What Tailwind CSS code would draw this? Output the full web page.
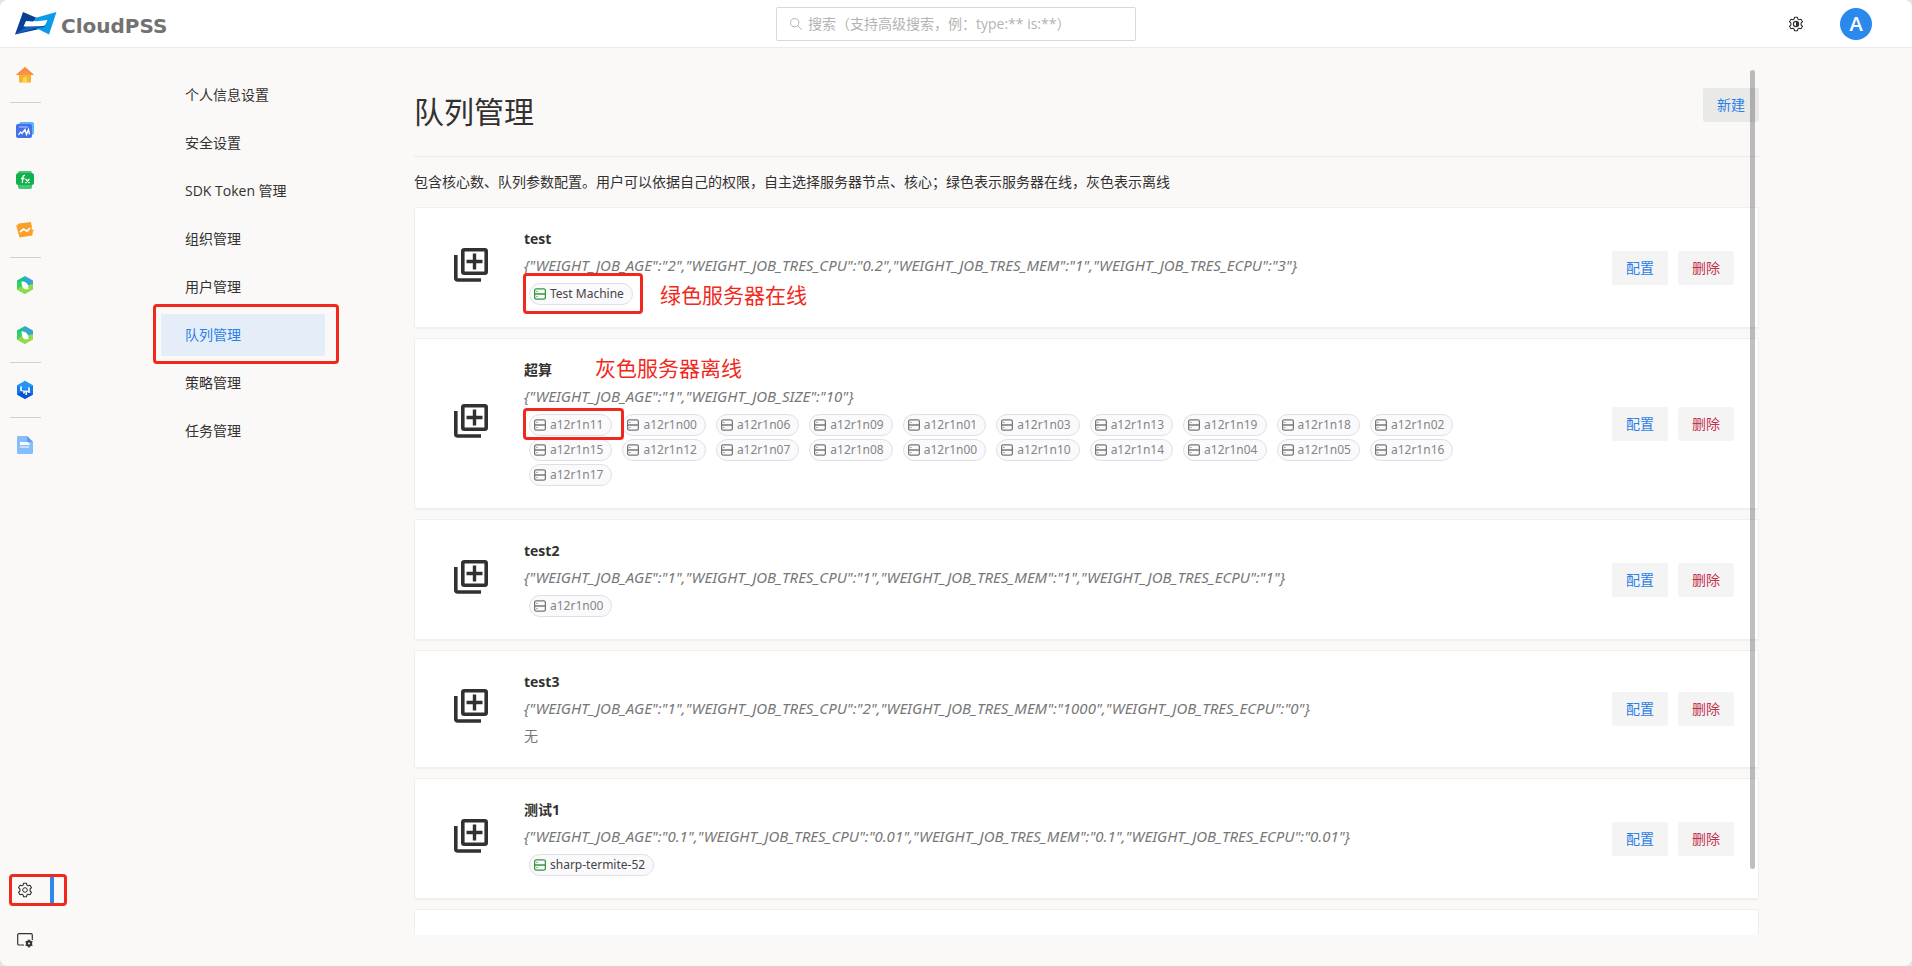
<!DOCTYPE html>
<html lang="zh-CN">
<head>
<meta charset="utf-8">
<title>CloudPSS - 队列管理</title>
<script src="https://cdn.jsdelivr.net/npm/@tailwindcss/browser@4"></script>
</head>
<body class="bg-[#e4e4e4] font-['Open_Sans','Noto_Sans_CJK_SC',sans-serif] text-sm text-[#323130]">
<svg class="hidden">
  <symbol id="gear" viewBox="0 0 16 16"><path d="M6.600 1.200h2.800l.5 1.900 1.200.7 1.900-.6 1.500 2.500-1.400 1.300v2l1.400 1.300-1.500 2.500-1.900-.6-1.200.7-.5 1.900H6.600l-.5-1.900-1.200-.7-1.900.6-1.500-2.500L2.900 9V7L1.500 5.700 3 3.200l1.900.6 1.200-.7z" fill="none" stroke="currentColor" stroke-width="1.1" stroke-linejoin="round"/></symbol>
  <symbol id="queue" viewBox="0 0 34 34"><path d="M1.800 7v23a2 2 0 0 0 2 2H27" fill="none" stroke="currentColor" stroke-width="3.6"/><rect x="8.800" y="1.800" width="23.400" height="23.400" rx="1.500" fill="none" stroke="currentColor" stroke-width="3.6"/><path d="M20.500 5.500v16M12.500 13.500h16" stroke="currentColor" stroke-width="3.4"/></symbol>
  <symbol id="server" viewBox="0 0 12 12"><rect x=".6" y=".9" width="10.800" height="10.200" rx="1.600" fill="none" stroke="currentColor" stroke-width="1.3"/><path d="M.6 6h10.800" stroke="currentColor" stroke-width="1.500"/><path d="M2.300 3.400h1.200M2.300 8.600h1.200" stroke="currentColor" stroke-width="1"/></symbol>
  <symbol id="hexleaf" viewBox="0 0 18 18"><path d="M9 0L1 4.500V9l8 0z" fill="#18c48e"/><path d="M9 0l8 4.500V13L9 9z" fill="#3aa3dc"/><path d="M1 4.500L9 9v9L1 13.500z" fill="#35cf62"/><path d="M1 13.500L4 11l9-2 4-1v5.500L9 18z" fill="#8fdc48"/><path d="M5.200 5.500c3-.6 6.600 1.500 7 4.200.3 1.600-.2 2.300.6 3.300-2.600.5-4.600.4-5.900-1.200C5.500 10 6.100 7.600 5.200 5.500z" fill="#fff"/></symbol>
</svg>
<div class="relative flex h-screen flex-col overflow-hidden rounded-lg bg-[#faf9f8]">
  <header class="grid h-12 shrink-0 grid-cols-[1fr_360px_1fr] items-center border-b border-[#edebe9] bg-white">
    <a href="#" class="flex items-center gap-1 pl-[15px]" aria-label="CloudPSS">
      <svg class="h-[23px] w-[42px]" viewBox="0 0 42 23"><path d="M8 0l14 6-4 4-7-1-2.500 5.500L31 13l-2 3L0 22.500z" fill="#0a3f97"/><path d="M41.500 0L34 22.500 21 16l8-1 3.500-7L20 9.500V6z" fill="#0c9be6"/><path d="M0 22.500L21 16l10-3-17 .6-4.500 2.400z" fill="#1560b8"/><path d="M12.500 9.500h19l-2.500 4.500-18.500.5z" fill="#fff"/></svg>
      <span class="pt-1 font-['DejaVu_Sans'] text-[20px] leading-6 font-bold text-[#727272]">CloudPSS</span>
    </a>
    <label class="flex h-[34px] items-center gap-1.5 rounded-xs border border-[#d9d9d9] pl-[13px] text-[#b3b3b3]">
      <svg class="size-3 shrink-0" viewBox="0 0 12 12" fill="none" stroke="currentColor"><circle cx="4.700" cy="4.700" r="4.100"/><path d="M7.700 7.700l4 4"/></svg>
      <input type="search" aria-label="搜索" placeholder="搜索（支持高级搜索，例：type:** is:**）" class="w-full bg-transparent text-sm outline-none placeholder:text-[#b3b3b3]">
    </label>
    <div class="flex items-center justify-end gap-9 pr-10">
      <button type="button" aria-label="主题设置" class="text-[#323130]"><svg class="size-4" viewBox="0 0 16 16"><use href="#gear"/><circle cx="8" cy="8" r="2.600" fill="none" stroke="currentColor" stroke-width="1.200"/><path d="M8 5.400a2.600 2.600 0 0 1 0 5.200z" fill="currentColor"/></svg></button>
      <button type="button" class="size-8 rounded-full bg-[#2b88ed] text-xl leading-8 font-semibold text-white">A</button>
    </div>
  </header>
  <div class="flex min-h-0 flex-1">
    <aside class="flex w-[50px] shrink-0 flex-col pt-0.5">
      <a href="#" aria-label="首页" class="flex h-[50px] items-center justify-center"><svg class="size-[18px]" viewBox="0 0 18 18"><path d="M9 1L0 9h3v7.500h12V9h3z" fill="#f9b42d"/><path d="M9 1L0 8.800h18z" fill="#f68b4c"/><path d="M9 4.500L3 9h12z" fill="#f5964a"/><path d="M7 16.500v-3.500a2 2 0 0 1 4 0v3.500z" fill="#fdd65c"/></svg></a>
      <div class="px-2.5 py-0.5"><hr class="w-[31px] border-[#d2d0ce]"></div>
      <a href="#" aria-label="仿真" class="flex h-[50px] items-center justify-center"><svg class="size-[18px]" viewBox="0 0 18 18"><rect x="3" y="1" width="15" height="13" rx="2" fill="#5db4f8"/><rect y="3" width="16" height="14" rx="2" fill="#4470e8"/><path d="M3 6h9" stroke="#b9cdfb" stroke-width="1.200"/><path d="M2.500 14l2-3 1.500 1.500 3-4 1.500 5 2-5 1 5" fill="none" stroke="#fff" stroke-width="1.300"/></svg></a>
      <a href="#" aria-label="函数" class="flex h-[50px] items-center justify-center"><svg class="size-[18px]" viewBox="0 0 18 18"><rect x="2" y="0" width="14" height="18" rx="2" fill="#43c777"/><rect y="2" width="18" height="12" rx="2.500" fill="#12b04c"/><path d="M9 4.500c-1.800-.5-2 .6-2.200 2.500L6.300 12M5 7.500h3.500M9.500 8l4 4M13.500 8l-4 4" fill="none" stroke="#fff" stroke-width="1.300"/></svg></a>
      <a href="#" aria-label="应用" class="flex h-[50px] items-center justify-center"><svg class="size-[18px]" viewBox="0 0 18 18"><path d="M0 4l5-1.500L16 4l-1 4 3 1-2 5H3z" fill="#fbb73a"/><path d="M3 2.500L15 1l1.500 13.500L3.500 16.500 1 6z" fill="#f9a02c"/><path d="M4 11l3.500-3 3.500 2.200 3-3" fill="none" stroke="#fff" stroke-width="1.700"/></svg></a>
      <div class="px-2.5 py-0.5"><hr class="w-[31px] border-[#d2d0ce]"></div>
      <a href="#" aria-label="模型" class="flex h-[50px] items-center justify-center"><svg class="size-[18px]"><use href="#hexleaf"/></svg></a>
      <a href="#" aria-label="数据" class="flex h-[50px] items-center justify-center"><svg class="size-[18px]"><use href="#hexleaf"/></svg></a>
      <div class="px-2.5 py-0.5"><hr class="w-[31px] border-[#d2d0ce]"></div>
      <a href="#" aria-label="分析" class="flex h-[50px] items-center justify-center"><svg class="size-[18px]" viewBox="0 0 18 18"><path d="M9 0l8 4.500v9L9 18l-8-4.500v-9z" fill="#1379ee"/><path d="M1 13.500L9 9l8 4.500L9 18z" fill="#0b50cf"/><path d="M9 0l8 4.500L9 9 1 4.500z" fill="#2596f6"/><path d="M5 5.500v4M8 10v2.500M10.300 9.500V14M13 6.500V12" stroke="#fff" stroke-width="1.700"/><path d="M4.500 9.500l8 1" stroke="#fff"/></svg></a>
      <div class="px-2.5 py-0.5"><hr class="w-[31px] border-[#d2d0ce]"></div>
      <a href="#" aria-label="文档" class="flex h-[50px] items-center justify-center"><svg class="size-[18px]" viewBox="0 0 18 18"><path d="M2 0h9l6 6v10.500a1.500 1.500 0 0 1-1.500 1.500h-13A1.500 1.500 0 0 1 1 16.500V1a1 1 0 0 1 1-1z" fill="#86bdfb"/><path d="M11 0l6 6h-4.500A1.500 1.500 0 0 1 11 4.500z" fill="#5d9cf0"/><path d="M4 6h7.500l2 1.500V9H4zM4 10.500h9v1H4z" fill="#fff"/></svg></a>
      <div class="mt-auto pb-px">
        <div class="relative">
          <a href="#" aria-label="设置" class="flex h-[50px] items-center justify-center"><svg class="size-4" viewBox="0 0 16 16"><use href="#gear"/><circle cx="8" cy="8" r="2.300" fill="none" stroke="currentColor"/></svg></a>
          <span class="absolute top-3 left-[50px] h-[26px] w-1 bg-[#2b88ed]"></span>
          <span class="absolute top-[9px] left-[9px] h-8 w-[58px] rounded-sm border-3 border-[#f1291c]"></span>
        </div>
        <a href="#" aria-label="系统管理" class="flex h-[50px] items-center justify-center"><svg class="size-4" viewBox="0 0 16 16"><path d="M7 13H2A1.300 1.300 0 0 1 .7 11.700V3A1.300 1.300 0 0 1 2 1.700h12A1.300 1.300 0 0 1 15.300 3v5" fill="none" stroke="currentColor" stroke-width="1.200"/><circle cx="12" cy="11.500" r="2.200" fill="none" stroke="currentColor" stroke-width="1.900"/><path d="M12 7.500v8M8.500 9.500l7 4M15.500 9.500l-7 4" stroke="currentColor" stroke-width="1.400"/><circle cx="12" cy="11.500" r="1" fill="#faf9f8"/></svg></a>
      </div>
    </aside>
    <nav class="ml-[111px] flex w-[164px] shrink-0 flex-col gap-1.5 pt-[26px]">
      <a href="#" class="h-[42px] pl-6 leading-[42px]">个人信息设置</a>
      <a href="#" class="h-[42px] pl-6 leading-[42px]">安全设置</a>
      <a href="#" class="h-[42px] pl-6 leading-[42px]">SDK Token 管理</a>
      <a href="#" class="h-[42px] pl-6 leading-[42px]">组织管理</a>
      <a href="#" class="h-[42px] pl-6 leading-[42px]">用户管理</a>
      <a href="#" aria-current="page" class="relative h-[42px] rounded-xs bg-[#e5eef8] pl-6 leading-[42px] text-[#2b7fe8]">队列管理<span class="absolute -top-2.5 -left-2 h-[60px] w-[186px] rounded-sm border-3 border-[#f1291c]"></span></a>
      <a href="#" class="h-[42px] pl-6 leading-[42px]">策略管理</a>
      <a href="#" class="h-[42px] pl-6 leading-[42px]">任务管理</a>
    </nav>
    <main class="relative mt-[22px] mr-[153px] mb-[31px] ml-[89px] min-w-0 flex-1 overflow-hidden">
      <div class="flex h-[87px] items-start justify-between border-b border-[#edebe9] pt-[18px]">
        <h1 class="text-[30px] leading-[48px]">队列管理</h1>
        <button type="button" class="h-[34px] w-14 rounded-xs bg-[#e9e9e8] text-[#2b7fe8]">新建</button>
      </div>
      <p class="py-3.5 leading-[22px]">包含核心数、队列参数配置。用户可以依据自己的权限，自主选择服务器节点、核心；绿色表示服务器在线，灰色表示离线</p>
      <div id="queues" class="flex flex-col gap-2.5"></div>
      <div class="absolute top-0 right-1 h-[799px] w-[5px] rounded-full bg-black/25"></div>
    </main>
  </div>
</div>
<script>
const queues = [
  {name: 'test', weights: '{"WEIGHT_JOB_AGE":"2","WEIGHT_JOB_TRES_CPU":"0.2","WEIGHT_JOB_TRES_MEM":"1","WEIGHT_JOB_TRES_ECPU":"3"}', nodes: ['Test Machine'], online: true,
   notes: '<span class="absolute top-[65px] left-[108px] h-[41px] w-[120px] rounded-sm border-3 border-[#f1291c]"></span><span class="absolute top-[71px] left-[245px] text-[21px] leading-8 text-[#f1291c]">绿色服务器在线</span>'},
  {name: '超算', weights: '{"WEIGHT_JOB_AGE":"1","WEIGHT_JOB_SIZE":"10"}',
   nodes: ['11','00','06','09','01','03','13','19','18','02','15','12','07','08','00','10','14','04','05','16','17'].map(n => 'a12r1n' + n),
   notes: '<span class="absolute top-[69px] left-[108px] h-8 w-[101px] rounded-sm border-3 border-[#f1291c]"></span><span class="absolute top-[13px] left-[180px] text-[21px] leading-8 text-[#f1291c]">灰色服务器离线</span>'},
  {name: 'test2', weights: '{"WEIGHT_JOB_AGE":"1","WEIGHT_JOB_TRES_CPU":"1","WEIGHT_JOB_TRES_MEM":"1","WEIGHT_JOB_TRES_ECPU":"1"}', nodes: ['a12r1n00']},
  {name: 'test3', weights: '{"WEIGHT_JOB_AGE":"1","WEIGHT_JOB_TRES_CPU":"2","WEIGHT_JOB_TRES_MEM":"1000","WEIGHT_JOB_TRES_ECPU":"0"}', nodes: []},
  {name: '测试1', weights: '{"WEIGHT_JOB_AGE":"0.1","WEIGHT_JOB_TRES_CPU":"0.01","WEIGHT_JOB_TRES_MEM":"0.1","WEIGHT_JOB_TRES_ECPU":"0.01"}', nodes: ['sharp-termite-52'], online: true},
];
const tag = (n, on) => `<li class="flex h-[22px] min-w-[83px] items-center gap-1 rounded-full border border-[#e1dfe3] bg-[#fafafc] pr-2 pl-1 font-['Noto_Sans'] text-xs ${on ? 'text-[#444444]' : 'text-[#858585]'}"><svg class="size-3 shrink-0 ${on ? 'text-[#2f9a3a]' : 'text-[#777777]'}"><use href="#server"/></svg>${n}</li>`;
const card = 'relative flex shrink-0 items-center rounded-xs border border-[#f0efee] bg-white pr-6 pl-[39px] shadow-xs';
document.getElementById('queues').innerHTML = queues.map(q => `
  <article class="${card}">
    <svg class="mb-1.5 size-[34px] shrink-0 text-[#323130]"><use href="#queue"/></svg>
    <div class="ml-9 min-w-0 flex-1 py-[17px] pr-[72px]">
      <h2 class="leading-[27px] font-bold">${q.name}</h2>
      <p class="font-['Noto_Sans'] text-[15px] leading-[27px] whitespace-nowrap text-[#777777] italic">${q.weights}</p>
      ${q.nodes.length ? `<ul class="flex flex-wrap gap-x-2.5 gap-y-[3px] pt-1 pb-[5px] pl-[5px]">${q.nodes.map(n => tag(n, q.online)).join('')}</ul>` : '<p class="leading-7 text-[#777777]">无</p>'}
    </div>
    <div class="flex gap-2.5">
      <button type="button" class="h-[34px] w-14 rounded-xs bg-[#f4f4f4] text-[#2b7fe8]">配置</button>
      <button type="button" class="h-[34px] w-14 rounded-xs bg-[#f4f4f4] text-[#c4314b]">删除</button>
    </div>
    ${q.notes || ''}
  </article>`).join('') + `<article class="${card} h-[121px]"></article>`;
</script>
</body>
</html>
